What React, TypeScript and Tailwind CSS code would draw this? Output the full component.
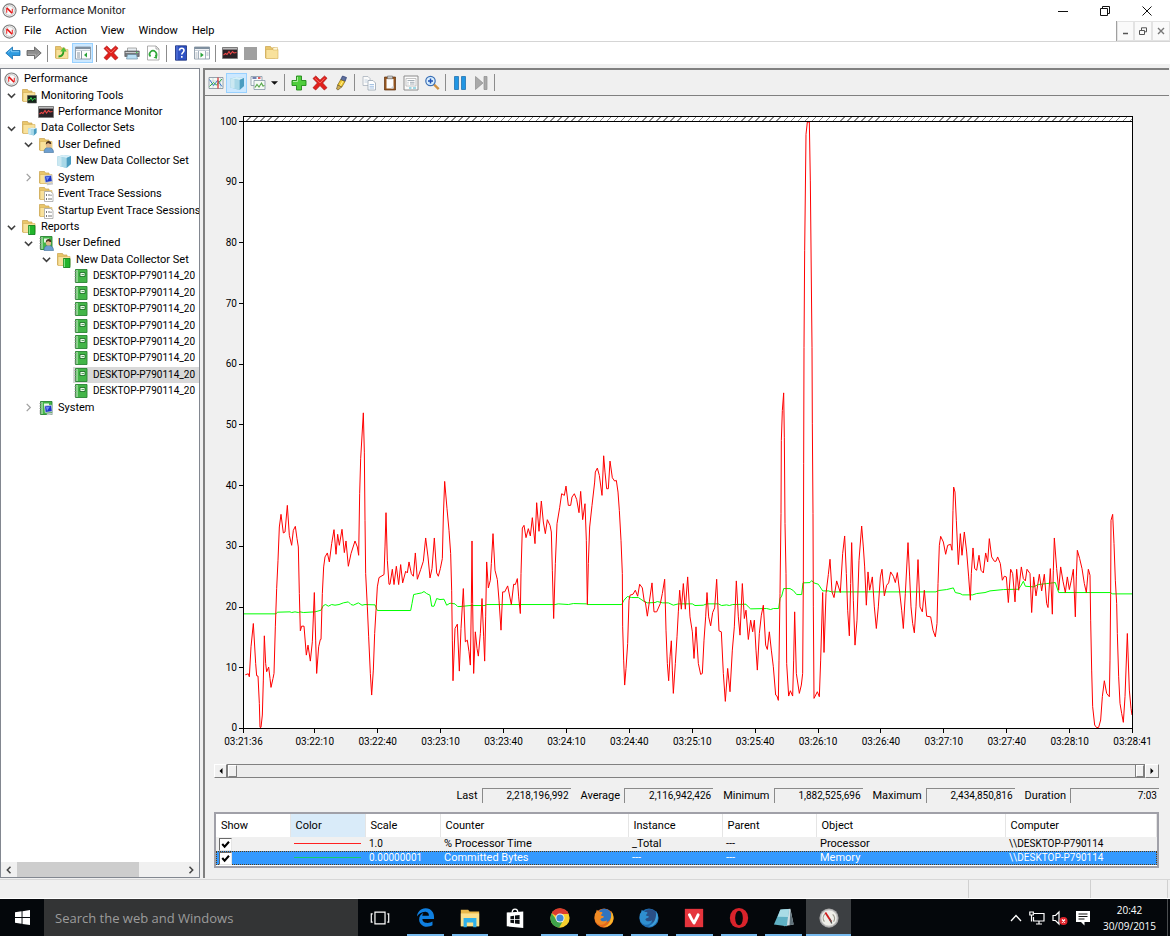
import type { ReactNode } from "react";
import { FaEdgeLegacy } from "react-icons/fa";

type IconProps = { className?: string };

function Svg({ className = "size-4", children }: { className?: string; children: ReactNode }) {
  return (
    <svg viewBox="0 0 16 16" className={`shrink-0 ${className}`} fill="none" aria-hidden="true">
      {children}
    </svg>
  );
}

/* ---------- icons ---------- */

function GaugeIcon({ className }: IconProps) {
  return (
    <Svg className={className}>
      <circle cx="8" cy="8" r="7" fill="#fff" stroke="#7d7d7d" strokeWidth="1.2" />
      <circle cx="8" cy="8" r="5.2" fill="#fafafa" stroke="#a9a9a9" strokeWidth=".8" />
      <path d="M5 10.500V5.500" stroke="#e33" strokeWidth="1.200" />
      <path d="M5 5 10.800 11" stroke="#e01010" strokeWidth="1.700" />
      <path d="M11 10.500V6" stroke="#e33" strokeWidth="1.200" />
    </Svg>
  );
}

function FolderShape() {
  return (
    <>
      <path d="M1.500 1.500h5l1 1.500H11v10H1.500z" fill="#e9c66b" stroke="#c9a24a" strokeWidth=".7" />
      <path d="M2 4.500h12v9H2z" fill="#f8e19c" stroke="#d3ae58" strokeWidth=".6" />
    </>
  );
}

function FolderIcon() {
  return (
    <Svg>
      <FolderShape />
      <path d="M9 2.500h4.500V5H9z" fill="#fff7d8" stroke="#d3ae58" strokeWidth=".5" />
    </Svg>
  );
}

function MonitorChartIcon() {
  return (
    <Svg>
      <path d="M.5 2.500h15v11H.5z" fill="#2a2226" stroke="#777" strokeWidth=".8" />
      <path d="M1 3h14v1.600H1z" fill="#b9b9b9" />
      <path d="m1.500 10 2-1.500 1.500 1 2-3 1.500 2.500 2-2.500 1.500 1.500 2.500-.5" stroke="#f04848" strokeWidth="1.100" />
    </Svg>
  );
}

function ToolsFolderIcon() {
  return (
    <Svg>
      <FolderShape />
      <path d="M6.500 7.500h9v7.500h-9z" fill="#15241a" stroke="#555" strokeWidth=".6" />
      <path d="m7 12 2-.5 1-2 1.500 3 1.500-2 2 .5" stroke="#35d04a" strokeWidth="1" />
    </Svg>
  );
}

function CubeShape() {
  return (
    <>
      <path d="m1.500 3.500 6-1.500 7.500 1v8l-4.500 4-9-2.500z" fill="#8cc6df" />
      <path d="m1.500 3.500 6-1.500 7.500 1-4.500 2z" fill="#d7eff8" />
      <path d="M10.500 5v10l4.500-4V3z" fill="#4a9cc0" />
      <path d="m1.500 3.500 9 1.500v10l-9-2.500z" fill="#a8d8e8" />
      <path d="m1.500 3.500 4 .7v9.300l-4-1z" fill="#cbe8f1" />
    </>
  );
}

function CubeIcon() {
  return (
    <Svg>
      <CubeShape />
    </Svg>
  );
}

function SetsFolderIcon() {
  return (
    <Svg>
      <FolderShape />
      <g transform="translate(6.500 6.500) scale(.6)">
        <CubeShape />
      </g>
    </Svg>
  );
}

function PersonShape() {
  return (
    <>
      <path d="M6 15.500c0-3.500 1.500-5 4.500-5s5 1.500 5 5z" fill="#6d9fd0" stroke="#42709c" strokeWidth=".6" />
      <circle cx="10.500" cy="8" r="2.600" fill="#e3b98b" />
      <path d="M7.800 7.500c0-2.700 1.400-3.500 2.900-3.500s2.700 1.300 2.500 3c-1.600.2-2.200-.8-3.200-1z" fill="#4b3520" />
    </>
  );
}

function UserFolderIcon() {
  return (
    <Svg>
      <FolderShape />
      <PersonShape />
    </Svg>
  );
}

function ComputerShape() {
  return (
    <>
      <path d="m6.500 6 7-.8.800 6.300-7 1z" fill="#1b35c9" stroke="#c9cfdb" strokeWidth=".9" />
      <path d="m8 7 4-.5-3 4.500z" fill="#6f8bf3" />
      <path d="M8.500 13.500 15 12.500v2l-6 .8z" fill="#c4c8cf" />
    </>
  );
}

function SystemFolderIcon() {
  return (
    <Svg>
      <FolderShape />
      <ComputerShape />
    </Svg>
  );
}

function TraceFolderIcon() {
  return (
    <Svg>
      <FolderShape />
      <path d="M6.500 5.500h6l2.500 2v8H6.500z" fill="#fff" stroke="#9a9a9a" strokeWidth=".7" />
      <path d="M8.500 8v2M11 8v2M13 8.500V10M8.500 12v2M11 12v2M13 12v2" stroke="#777" strokeWidth="1" />
    </Svg>
  );
}

function ReportsFolderIcon() {
  return (
    <Svg>
      <FolderShape />
      <path d="M7.500 6.500H14v9H7.500z" fill="#22b52c" stroke="#087a14" strokeWidth=".8" />
      <path d="M8.300 7v8" stroke="#a6efa6" strokeWidth=".9" />
    </Svg>
  );
}

function BookShape() {
  return (
    <>
      <path d="M2.500 1.500H14v13H2.500z" fill="#43b548" stroke="#2a8433" strokeWidth=".9" />
      <path d="M3 2h2v12H3z" fill="#8bd68d" />
      <path d="M1.500 3.500h2M1.500 6h2M1.500 8.500h2M1.500 11h2M1.500 13h2" stroke="#8d8d8d" strokeWidth=".9" />
    </>
  );
}

function BookIcon() {
  return (
    <Svg>
      <BookShape />
      <path d="M7 4.500h5v4H7z" fill="#eafbe9" stroke="#15661f" strokeWidth=".8" />
      <path d="M8.500 6.500H11" stroke="#4c9a52" strokeWidth=".9" />
    </Svg>
  );
}

function UserBookIcon() {
  return (
    <Svg>
      <BookShape />
      <path d="M6 3.500h5v4H6z" fill="#eafbe9" />
      <PersonShape />
    </Svg>
  );
}

function SystemBookIcon() {
  return (
    <Svg>
      <BookShape />
      <path d="M6 3.500h5v4H6z" fill="#eafbe9" />
      <ComputerShape />
    </Svg>
  );
}

function ArrowIcon({ flip = false }: { flip?: boolean }) {
  return (
    <Svg className={flip ? "size-4 rotate-180" : "size-4"}>
      <path
        d="M.8 8 7.500 2v3.500H15v5H7.500V14z"
        fill={flip ? "#8f8f8f" : "#2e9be0"}
        stroke={flip ? "#5c5c5c" : "#176fae"}
        strokeWidth=".8"
        strokeLinejoin="round"
      />
      <path d="m3 7.500 3.500-3.200v2.400h7.500" stroke={flip ? "#b8b8b8" : "#8fd2f7"} strokeWidth=".8" />
    </Svg>
  );
}

function FolderUpIcon() {
  return (
    <Svg>
      <FolderShape />
      <path d="M4.500 11.500c4 0 5-2 5-6" stroke="#2f9e24" strokeWidth="1.800" />
      <path d="m6.300 6.500 3.300-4.300 3.200 4.300z" fill="#4ec03a" />
    </Svg>
  );
}

function PaneIcon({ right = false }: { right?: boolean }) {
  return (
    <Svg>
      <path d="M.5 2h15v12H.5z" fill="#fdfdfd" stroke="#8a98a6" strokeWidth=".9" />
      <path d="M.5 2h15v2H.5z" fill="#7f8f9f" />
      <path d="M1 5.300h14" stroke="#b9c4cf" strokeWidth="1" />
      {right ? (
        <>
          <path d="M11.500 6v8M4.500 6v8M1.500 8h2M1.500 10h2M1.500 12h2M12.500 8h2M12.500 10h2" stroke="#9aa8b5" strokeWidth=".9" />
          <path d="m6.500 7.500 3.200 2.500-3.200 2.500z" fill="#29a339" />
        </>
      ) : (
        <>
          <path d="M6.500 6v8M2 8h3M2 10h3M2 12h3" stroke="#7c8b99" strokeWidth=".9" />
          <path d="m12 7.500-3 2.500 3 2.500z" fill="#29a339" />
        </>
      )}
    </Svg>
  );
}

function DeleteIcon() {
  return (
    <Svg>
      <path
        d="M1 3.500 3.800 1l4.200 4.200L12.500 1 15 3.200 10.600 8l4.400 4.700L12.300 15 8 10.600 3.700 15 1 12.700 5.400 8z"
        fill="#e2201c"
        stroke="#a50f0d"
        strokeWidth=".7"
      />
      <path d="M3 3.300 8 8l4.500-4.700" stroke="#f77a70" strokeWidth=".8" />
    </Svg>
  );
}

function PrinterIcon() {
  return (
    <Svg>
      <path d="M3.500 3h9v4h-9z" fill="#e9eef2" stroke="#8b8b8b" strokeWidth=".7" />
      <path d="M.8 6h14.400v5.500H.8z" fill="#77797c" stroke="#4b4e51" strokeWidth=".6" />
      <path d="M1.500 7.500h13" stroke="#d3d6d8" strokeWidth=".9" />
      <path d="M3.500 9.500h9l1 4.500h-11z" fill="#b9dff4" stroke="#5c7f94" strokeWidth=".6" />
      <path d="M12 7.500h1.500" stroke="#42d34b" />
    </Svg>
  );
}

function RefreshIcon() {
  return (
    <Svg>
      <path d="M2.500 1h8.500l3 3v11H2.500z" fill="#fff" stroke="#9b9b9b" strokeWidth=".8" />
      <path d="M11 1v3h3" stroke="#9b9b9b" strokeWidth=".8" />
      <path d="M5.500 11.500a3.400 3.400 0 1 1 5 0" stroke="#31a83b" strokeWidth="1.700" />
      <path d="m12.300 10-.3 3.800-3.500-1z" fill="#31a83b" />
    </Svg>
  );
}

function HelpIcon() {
  return (
    <Svg>
      <path d="M2.500.8h11v14.400h-11z" fill="#2f52c4" stroke="#152c78" strokeWidth=".8" />
      <path d="M4 1v14" stroke="#6e8ae6" strokeWidth=".8" />
      <path d="M6.500 5.500c0-3 4.500-3 4.500 0 0 2-2.200 2-2.200 4" stroke="#fff" strokeWidth="1.600" />
      <path d="M8 11h1.600v1.700H8z" fill="#fff" />
    </Svg>
  );
}

function GraphViewIcon() {
  return (
    <Svg>
      <path d="M1 2.500h14v11H1z" fill="#f3faf5" stroke="#7d8c99" strokeWidth=".8" />
      <path d="M1 6h14M1 10h14M5 3v10M12.500 3v10" stroke="#c3d0da" strokeWidth=".7" />
      <path d="m1.500 4.500 4 6 4-5 4.500 6" stroke="#3c76cb" strokeWidth="1" />
      <path d="m1.500 11.500 4-4 3 2.500 5.500-6" stroke="#35b043" strokeWidth="1" />
      <path d="M10 2.500v11" stroke="#dd2b2b" strokeWidth="1.200" />
    </Svg>
  );
}

function GraphTypeIcon() {
  return (
    <Svg>
      <path d="M1 1.500h11v9H1z" fill="#f7fafc" stroke="#8496a6" strokeWidth=".8" />
      <path d="M2.500 3h4" stroke="#293f86" strokeWidth="1.300" />
      <path d="M8 3h2.500" stroke="#d53030" strokeWidth="1.500" />
      <path d="M4 5.500h11v9H4z" fill="#f4faf4" stroke="#8496a6" strokeWidth=".8" />
      <path d="m5 12.500 2-3 2 2.500 2.500-4 1.500 3 1.500-.5" stroke="#57a74b" strokeWidth="1.100" />
    </Svg>
  );
}

function PlusIcon() {
  return (
    <Svg>
      <path
        d="M5.500 1h5v4.500H15v5h-4.500V15h-5v-4.500H1v-5h4.500z"
        fill="#4fce3c"
        stroke="#23891a"
        strokeWidth=".9"
      />
      <path d="M6.500 2v4.500H2" stroke="#b5f2a6" strokeWidth=".9" />
    </Svg>
  );
}

function HighlightIcon() {
  return (
    <Svg>
      <path d="m9.500 1 4 1.500-1.500 4-4.300-1.800z" fill="#5d6f9c" stroke="#27386f" strokeWidth=".7" />
      <path d="M7.700 4.700 12 6.500 8.800 12 4.700 10z" fill="#f4cd31" stroke="#7a6012" strokeWidth=".7" />
      <path d="M10 6 7 11" stroke="#fff0a0" strokeWidth=".9" />
      <path d="m4.700 10 4 2L5 15l-1.500-1z" fill="#cfae52" stroke="#5a4a20" strokeWidth=".6" />
    </Svg>
  );
}

function CopyIcon() {
  return (
    <Svg>
      <path d="M2 1.500h5l2 2v7H2z" fill="#fbfbfb" stroke="#a9b3bd" strokeWidth=".8" />
      <path d="M3.500 5h3M3.500 7h3" stroke="#b9cbdd" strokeWidth=".8" />
      <path d="M7 5.500h5l2.500 2.500v7H7z" fill="#fff" stroke="#98a5b3" strokeWidth=".8" />
      <path d="M8.500 9.500H13M8.500 11.300H13M8.500 13H13" stroke="#8fb4dd" strokeWidth=".8" />
    </Svg>
  );
}

function PasteIcon() {
  return (
    <Svg>
      <path d="M2.500 2h11v13h-11z" fill="#96561f" stroke="#5d2f0d" strokeWidth=".7" />
      <path d="M4.500 4h7v9.500h-7z" fill="#fdfdfd" />
      <path d="M5.500 1h5v2.800h-5z" fill="#c7c7c7" stroke="#6d6d6d" strokeWidth=".6" />
      <path d="m11.500 10.500-3 3h3z" fill="#c9d2db" />
    </Svg>
  );
}

function PropertiesIcon() {
  return (
    <Svg>
      <path d="M1 1h14v14H1z" fill="#fbfbfb" stroke="#8c8c8c" strokeWidth="1" />
      <path d="M3 3.500h10v7.500H3z" fill="#fff" stroke="#b4b4b4" strokeWidth=".8" />
      <path d="M4.500 5.500h7M4.500 7.300h1M7 7.300h4.500M4.500 9h1M7 9h4.500" stroke="#8d99a3" strokeWidth=".8" />
      <path d="M6 13h2.500M10 13h3" stroke="#40b6cf" strokeWidth="1.200" />
    </Svg>
  );
}

function ZoomIcon() {
  return (
    <Svg>
      <path d="m10 9.500 4.700 4.700" stroke="#d09142" strokeWidth="2.400" />
      <circle cx="6.500" cy="6" r="4.700" fill="#d9efff" stroke="#3b6fb5" strokeWidth="1.200" />
      <path d="M6.500 3.500v5M4 6h5" stroke="#1f50b4" strokeWidth="1.500" />
    </Svg>
  );
}

function PauseIcon() {
  return (
    <Svg>
      <path d="M2.500 1.500h4v13h-4zM9.500 1.500h4v13h-4z" fill="#2196e3" stroke="#1467a8" strokeWidth=".7" />
    </Svg>
  );
}

function StepIcon() {
  return (
    <Svg>
      <path d="m2.500 1.500 7.500 6.500-7.500 6.500zM11 1.500h3v13h-3z" fill="#a9a9a9" stroke="#8d8d8d" strokeWidth=".7" />
    </Svg>
  );
}

function Chevron({ open }: { open: boolean }) {
  return (
    <svg viewBox="0 0 10 10" className="size-[9px]" fill="none" aria-hidden="true">
      <path
        d={open ? "M1 3l4 4 4-4" : "M3 1l4 4-4 4"}
        stroke={open ? "#404040" : "#a0a0a0"}
        strokeWidth={open ? 1.8 : 1.4}
      />
    </svg>
  );
}

/* ---------- window chrome ---------- */

function TitleBar() {
  return (
    <header className="flex h-[21px] items-center bg-white px-0.5">
      <GaugeIcon className="size-[15px]" />
      <h1 className="ml-1 flex-1 text-[#222]">Performance Monitor</h1>
      <div className="flex">
        <button type="button" aria-label="Minimize" className="grid h-5 w-[42px] place-items-center">
          <svg viewBox="0 0 10 10" className="size-2.5" stroke="#111" fill="none">
            <path d="M0 5.500h10" />
          </svg>
        </button>
        <button type="button" aria-label="Restore" className="grid h-5 w-[42px] place-items-center">
          <svg viewBox="0 0 10 10" className="size-2.5" stroke="#111" fill="none">
            <path d="M.5 2.500h7v7h-7zM2.500 2V.5h7v7H8" />
          </svg>
        </button>
        <button type="button" aria-label="Close" className="grid h-5 w-[42px] place-items-center">
          <svg viewBox="0 0 10 10" className="size-2.5" stroke="#111" fill="none">
            <path d="m.5.5 9 9M9.500.5l-9 9" />
          </svg>
        </button>
      </div>
    </header>
  );
}

function MenuBar() {
  return (
    <nav className="flex h-5 items-center bg-white pl-0.5">
      <GaugeIcon className="size-[15px]" />
      <div className="ml-[7px] flex flex-1 gap-[14px]">
        {["File", "Action", "View", "Window", "Help"].map((m) => (
          <button key={m} type="button">
            {m}
          </button>
        ))}
      </div>
      <div className="flex h-full border-l border-[#a0a0a0] bg-[#f0f0f0]">
        <button type="button" aria-label="Minimize child" className="grid w-[17px] place-items-center border border-[#e3e3e3] bg-[#fafafa]">
          <svg viewBox="0 0 8 8" className="size-2" stroke="#555" fill="none">
            <path d="M1 6.500h5" strokeWidth="1.500" />
          </svg>
        </button>
        <button type="button" aria-label="Restore child" className="grid w-[18px] place-items-center border border-[#e3e3e3] bg-[#fafafa]">
          <svg viewBox="0 0 8 8" className="size-2" stroke="#555" fill="none">
            <path d="M.5 3.500h5v4h-5zM2.500 3V.8h5v4H6" />
          </svg>
        </button>
        <button type="button" aria-label="Close child" className="grid w-[18px] place-items-center border border-[#e3e3e3] bg-[#fafafa]">
          <svg viewBox="0 0 8 8" className="size-2" stroke="#777" fill="none">
            <path d="m1 1 6 6M7 1 1 7" strokeWidth="1.400" />
          </svg>
        </button>
      </div>
    </nav>
  );
}

function ToolButton({ label, active = false, children }: { label: string; active?: boolean; children: ReactNode }) {
  return (
    <button
      type="button"
      aria-label={label}
      className={`grid h-5 w-[21px] shrink-0 place-items-center ${
        active ? "border border-[#99d1ff] bg-[#cce8ff]" : ""
      }`}
    >
      {children}
    </button>
  );
}

function Separator() {
  return (
    <span className="flex w-[7px] shrink-0 justify-center">
      <span className="h-[17px] w-px bg-[#8c8c8c]" />
    </span>
  );
}

function MainToolbar() {
  return (
    <div className="flex h-[23px] items-center border-t border-[#d5d5d5] bg-white pl-0.5">
      <ToolButton label="Back"><ArrowIcon /></ToolButton>
      <ToolButton label="Forward"><ArrowIcon flip /></ToolButton>
      <Separator />
      <ToolButton label="Up one level"><FolderUpIcon /></ToolButton>
      <ToolButton label="Show console tree" active><PaneIcon /></ToolButton>
      <Separator />
      <ToolButton label="Delete"><DeleteIcon /></ToolButton>
      <ToolButton label="Print"><PrinterIcon /></ToolButton>
      <ToolButton label="Refresh"><RefreshIcon /></ToolButton>
      <Separator />
      <ToolButton label="Help"><HelpIcon /></ToolButton>
      <ToolButton label="Show action pane"><PaneIcon right /></ToolButton>
      <Separator />
      <ToolButton label="View log data"><MonitorChartIcon /></ToolButton>
      <ToolButton label="Stop"><span className="size-[13px] bg-[#a0a0a0]" /></ToolButton>
      <ToolButton label="Open folder"><FolderIcon /></ToolButton>
    </div>
  );
}

/* ---------- tree ---------- */

type TreeNode = {
  label: string;
  depth: number;
  open?: boolean;
  icon: ReactNode;
  selected?: boolean;
};

const DATASET = "DESKTOP-P790114_20";

const TREE: TreeNode[] = [
  { label: "Monitoring Tools", depth: 0, open: true, icon: <ToolsFolderIcon /> },
  { label: "Performance Monitor", depth: 1, icon: <MonitorChartIcon /> },
  { label: "Data Collector Sets", depth: 0, open: true, icon: <SetsFolderIcon /> },
  { label: "User Defined", depth: 1, open: true, icon: <UserFolderIcon /> },
  { label: "New Data Collector Set", depth: 2, icon: <CubeIcon /> },
  { label: "System", depth: 1, open: false, icon: <SystemFolderIcon /> },
  { label: "Event Trace Sessions", depth: 1, icon: <TraceFolderIcon /> },
  { label: "Startup Event Trace Sessions", depth: 1, icon: <TraceFolderIcon /> },
  { label: "Reports", depth: 0, open: true, icon: <ReportsFolderIcon /> },
  { label: "User Defined", depth: 1, open: true, icon: <UserBookIcon /> },
  { label: "New Data Collector Set", depth: 2, open: true, icon: <ReportsFolderIcon /> },
  ...Array.from({ length: 8 }, (_, i) => ({
    label: DATASET,
    depth: 3,
    icon: <BookIcon />,
    selected: i === 6,
  })),
  { label: "System", depth: 1, open: false, icon: <SystemBookIcon /> },
];

const INDENT = ["pl-[4px]", "pl-[21px]", "pl-[39px]", "pl-[56px]"];

function TreePanel() {
  return (
    <aside className="flex w-[200px] shrink-0 flex-col border border-[#828790] bg-white">
      <div role="tree" className="grid h-[347px] auto-rows-fr overflow-hidden pt-0.5">
        <div role="treeitem" className="flex items-center gap-[5px] pl-[3px]">
          <GaugeIcon className="size-[15px]" />
          Performance
        </div>
        {TREE.map((n, i) => (
          <div key={i} role="treeitem" className={`flex items-center ${INDENT[n.depth]}`}>
            <span className="flex w-4 shrink-0 pl-[2px]">{n.open !== undefined && <Chevron open={n.open} />}</span>
            <span
              className={`flex h-full flex-1 items-center gap-1 whitespace-nowrap ${
                n.selected ? "bg-[#d9d9d9]" : ""
              }`}
            >
              {n.icon}
              <span className={n.depth === 3 ? "text-[10px]" : ""}>{n.label}</span>
            </span>
          </div>
        ))}
      </div>
      <div className="flex-1" />
      <div className="flex h-[15px] bg-[#f0f0f0]">
        <button type="button" aria-label="Scroll left" className="grid w-4 place-items-center">
          <svg viewBox="0 0 8 8" className="size-2" fill="none" stroke="#444" strokeWidth="1.500">
            <path d="M5.500.8 2.300 4l3.200 3.200" />
          </svg>
        </button>
        <div className="flex-1">
          <div className="h-full w-[122px] bg-[#cdcdcd]" />
        </div>
        <button type="button" aria-label="Scroll right" className="grid w-4 place-items-center">
          <svg viewBox="0 0 8 8" className="size-2" fill="none" stroke="#444" strokeWidth="1.500">
            <path d="M2.500.8 5.700 4 2.500 7.200" />
          </svg>
        </button>
      </div>
    </aside>
  );
}

/* ---------- chart ---------- */

// Each run is a stretch of samples relative to its own origin; the plot is 2664 x 1821 units.
type Run = { x: number; y: number; pts: string };

const PROCESSOR: Run[] = [
  {
    x: -12,
    y: 777,
    pts: "16,884 25,881 28,890 33,800 40,730 47,850 50,887 54,888 58,970 60,1042 63,1042 67,1005 70,900 73,767 77,850 80,875 86,861 90,895 93,922 99,895 102,880 106,740 110,625 114,540 118,440 123,402 130,458 135,455 142,375 148,465 155,495 160,450 166,438 171,475 175,500 178,640 181,752 185,738 192,738 199,825 204,795 211,843 217,785 223,637 227,780 230,880 236,800 241,778 243,778 247,640 251,560 255,530 262,518 268,545 275,490 282,448 288,522 293,462 298,495 306,447 313,517 318,482 325,558 333,520 345,482 352,500 356,525 359,340 362,235 370,97 373,215 375,420 377,580 382,680 386,770 391,880 395,945 400,870 404,760 408,690 412,620 417,592 432,583 435,500 438,397 442,540 447,612 450,612 457,567 462,613 469,558 476,613 482,553 488,608 497,573 502,578 507,545 514,580 520,588 526,518 532,597 542,568 550,543 557,473 564,530 570,593 576,565 583,473 590,578 595,588 601,565 607,535 610,410 614,303 621,385 627,450 632,520 635,630 637,780 639,902 645,745 652,732 658,873 663,745",
  },
  {
    x: 648,
    y: 927,
    pts: "10,475 16,635 22,630 27,665 31,705 34,520 36,332 38,520 41,730 46,605 51,655 55,678 61,610 66,505 71,620 74,693 77,560 80,395 85,473 91,450 94,400 99,310 105,420 112,448 117,510 123,600 128,485 134,485 143,467 154,523 161,462 166,463 172,445 176,500 181,550 183,430 187,293 192,285 198,322 205,295 211,317 217,262 225,340 230,217 237,303 244,212 250,275 256,310 262,268 270,285 274,305 277,420 281,565 286,400 291,280 299,232 305,190 313,195 318,167 325,225 332,225 336,200 343,190 350,207 357,247 362,183 368,268 375,220 379,330 382,523 385,400 389,290 396,225 404,155 406,125 412,113 418,135 426,195 431,76 435,125 440,175 445,175 450,92 457,142 464,152 469,150 474,185 478,240 483,330 487,430 488,590 491,690 494,765 498,715 503,640 507,510 510,495 519,492 526,480 533,498 539,462 547,473 553,515 556,515 562,558 568,515 576,458 582,545 590,545 601,520 607,490 614,447 618,600 622,700 626,752 630,680 634,632 637,720 640,790 646,700 651,620 655,545 659,480 664,537 670,460 676,537",
  },
  {
    x: 1308,
    y: 777,
    pts: "23,590 30,710 37,755 42,835 48,740 55,850 62,883 67,880 72,780 77,710 81,637 86,710 92,737 98,697 104,683 110,597 117,752 124,755 130,880 136,964 143,865 150,935 157,810 163,740 169,602 175,710 180,765 187,610 193,715 198,690 205,778 212,720 218,755 223,720 228,810 232,870 238,760 244,705 250,675 257,795 262,808 268,755 274,810 280,860 287,945 291,948 295,961 297,840 300,640 303,400 304,180 307,90 311,37 313,170 315,430 318,580 320,850 326,948 331,932 338,948 341,840 344,695 349,880 358,940 364,915 368,880 370,600 371,250 372,-100 374,-390 378,-740 382,-777 388,-777 391,-600 396,-100 397,130 399,400 400,680 402,955 412,935 418,950 422,840 428,637 432,817 438,640 445,583 450,537 456,635 462,652 470,602 481,637 488,520 494,467 499,580 503,690 508,767 512,610 515,487 520,660 525,795 531,720 537,540 545,437 550,500 554,560 559,675 564,575 569,630 577,590 583,680 589,745 595,680 601,590 606,567 613,647 620,615 626,608 632,575 640,588 646,607 652,577 659,635 665,690 670,745 676,640",
  },
  {
    x: 1968,
    y: 1017,
    pts: "24,247 29,350 33,440 38,490 43,518 48,440 54,298 60,440 67,455 73,390 80,468 92,470 99,510 106,530 111,490 114,370 118,255 122,228 130,245 137,282 143,255 152,252 156,270 159,150 161,80 165,95 169,180 175,313 181,220 186,285 193,215 200,275 206,350 211,420 214,340 219,263 224,325 230,330 237,285 243,330 250,338 257,278 263,305 268,235 275,290 283,303 288,303 293,290 301,310 307,360 313,348 319,350 325,427 332,327 338,340 345,425 350,327 356,390 364,320 370,355 376,362 381,327 390,340 395,457 401,350 408,407 413,375 418,342 425,392 433,342 440,430 444,442 451,325 457,462 460,330 463,233 470,325 476,390 482,320 489,363 496,397 502,350 508,388 514,360 520,327 526,470 529,350 532,270 539,295 546,325 553,370 559,397 565,327 570,345 572,480 575,630 578,740 584,795 590,803 596,802 602,780 607,710 613,662 620,700 628,710 630,600 632,400 633,180 638,162 642,250 646,360 650,430 652,520 656,650 660,730 665,760 670,787 675,710 682,520 688,690 693,745 696,765",
  },
];

const COMMITTED: Run[] = [
  {
    x: -12,
    y: 777,
    pts: "12,701 108,701 112,696 150,695 155,697 165,695 175,697 180,695 190,697 225,695 243,690 250,676 257,673 265,678 275,673 285,675 297,673 310,668 325,665 333,673 340,675 355,668 366,675 375,673 405,674 412,691 512,691 516,670 521,643 530,641 545,638 552,634 560,640 570,645 575,678 582,678 590,655 600,658 612,657 620,675 630,669 645,671 653,679",
  },
  {
    x: 648,
    y: 927,
    pts: "0,529 30,526 75,526 80,523 285,523 295,521 325,523 340,520 380,521 382,523 485,523 492,510 502,499 515,502 535,502 550,512 562,518 585,517 592,514 608,518 625,518 640,525 655,521",
  },
  {
    x: 1308,
    y: 777,
    pts: "0,671 37,671 45,676 70,675 80,671 115,671 125,676 140,674 148,676 158,673 198,672 205,680 212,686 260,685 272,688 280,685 296,685 300,655 305,648 311,625 330,625 340,631 350,643 365,643 369,608 390,607 395,601 402,608 415,612 428,632 445,632 455,635",
  },
  {
    x: 1968,
    y: 1017,
    pts: "0,395 108,395 115,391 140,388 160,383 166,397 180,400 188,404 218,404 230,400 255,397 270,392 310,388 355,387 362,378 370,363 376,378 400,380 415,373 440,370 466,367 476,397 630,397 638,401 696,401",
  },
];

function joinRuns(runs: Run[]) {
  return runs
    .flatMap((r) =>
      r.pts.split(" ").map((p) => {
        const [px, py] = p.split(",").map(Number);
        return `${px + r.x},${py + r.y}`;
      }),
    )
    .join(" ");
}

const Y_TICKS = [100, 90, 80, 70, 60, 50, 40, 30, 20, 10, 0];

// secs = distance to the next tick
const X_TICKS = [
  { label: "03:21:36", secs: 34 },
  { label: "03:22:10", secs: 30 },
  { label: "03:22:40", secs: 30 },
  { label: "03:23:10", secs: 30 },
  { label: "03:23:40", secs: 30 },
  { label: "03:24:10", secs: 30 },
  { label: "03:24:40", secs: 30 },
  { label: "03:25:10", secs: 30 },
  { label: "03:25:40", secs: 30 },
  { label: "03:26:10", secs: 30 },
  { label: "03:26:40", secs: 30 },
  { label: "03:27:10", secs: 30 },
  { label: "03:27:40", secs: 30 },
  { label: "03:28:10", secs: 30 },
  { label: "03:28:41", secs: 0 },
];

function Chart() {
  return (
    <div className="flex flex-1 flex-col pt-5 pr-[36px] pl-[13px] text-[10px]">
      <div className="ml-[25px] h-[6px] border border-black bg-white bg-[repeating-linear-gradient(135deg,transparent_0px,transparent_4px,#888_4px,#888_5px)]" />
      <div className="-mt-px flex min-h-[600px] flex-1">
        <div className="flex w-[25px] flex-col justify-between">
          {Y_TICKS.map((y) => (
            <div key={y} className="flex h-px items-center justify-end gap-0.5">
              <span>{y}</span>
              <span className="h-px w-1 bg-black" />
            </div>
          ))}
        </div>
        <div className="relative flex-1 border border-black bg-white">
          <svg viewBox="0 0 2664 1821" preserveAspectRatio="none" className="absolute inset-0 size-full" fill="none">
            <polyline points={joinRuns(COMMITTED)} stroke="#00ff00" strokeWidth="1" vectorEffect="non-scaling-stroke" />
            <polyline points={joinRuns(PROCESSOR)} stroke="#ff0000" strokeWidth="1" vectorEffect="non-scaling-stroke" />
          </svg>
        </div>
      </div>
      <div className="ml-[25px] flex pr-px">
        {X_TICKS.map((t) => (
          <div key={t.label} className="w-0 basis-0" style={{ flexGrow: t.secs }}>
            <div className="flex w-px flex-col items-center">
              <span className="h-1 w-px bg-black" />
              <span className="leading-[18px]">{t.label}</span>
            </div>
          </div>
        ))}
      </div>
    </div>
  );
}

function TimeSlider() {
  const bevel = "border border-t-white border-l-white border-r-[#808080] border-b-[#808080] bg-[#f0f0f0]";
  return (
    <div className="flex h-[14px]">
      <button type="button" aria-label="Earlier" className={`grid w-[13px] place-items-center ${bevel}`}>
        <svg viewBox="0 0 6 6" className="size-1.5" fill="#000">
          <path d="M4.500 0v6l-3-3z" />
        </svg>
      </button>
      <div className="flex flex-1 justify-between border border-[#808080] bg-[#ececec]">
        <div className={`w-[9px] ${bevel}`} />
        <div className="border-l border-[#808080]">
          <div className={`h-full w-[8px] ${bevel}`} />
        </div>
      </div>
      <button type="button" aria-label="Later" className={`grid w-[14px] place-items-center ${bevel}`}>
        <svg viewBox="0 0 6 6" className="size-1.5" fill="#000">
          <path d="M1.500 0v6l3-3z" />
        </svg>
      </button>
    </div>
  );
}

const STATS = [
  ["Last", "2,218,196,992"],
  ["Average", "2,116,942,426"],
  ["Minimum", "1,882,525,696"],
  ["Maximum", "2,434,850,816"],
  ["Duration", "7:03"],
];

function StatsRow() {
  return (
    <div className="mt-[10px] flex justify-end gap-[10px]">
      {STATS.map(([label, value]) => (
        <div key={label} className="flex h-[15px] items-center gap-1">
          <label htmlFor={`stat-${label}`}>{label}</label>
          <output
            id={`stat-${label}`}
            className="h-full w-[89px] border-t border-l border-[#8a8a8a] pr-0.5 text-right text-[10px] leading-[14px]"
          >
            {value}
          </output>
        </div>
      ))}
    </div>
  );
}

const COUNTERS = [
  { color: "bg-[#ff2020]", scale: "1.0", counter: "% Processor Time", instance: "_Total", object: "Processor", selected: false },
  { color: "bg-[#10cf70]", scale: "0.00000001", counter: "Committed Bytes", instance: "---", object: "Memory", selected: true },
];

const HEADERS = [
  { name: "Show", width: "w-[74px]" },
  { name: "Color", width: "w-[75px]" },
  { name: "Scale", width: "w-[75px]" },
  { name: "Counter", width: "w-[188px]" },
  { name: "Instance", width: "w-[94px]" },
  { name: "Parent", width: "w-[94px]" },
  { name: "Object", width: "w-[189px]" },
  { name: "Computer", width: "" },
];

function CounterTable() {
  return (
    <div className="mt-[9px] border-2 border-[#a0a0a8] bg-white pb-px">
      <table className="w-full table-fixed border-collapse text-left">
        <thead>
          <tr className="h-[23px]">
            {HEADERS.map((h) => (
              <th
                key={h.name}
                className={`border-r border-[#e5e5e5] py-0 pl-[5px] font-normal ${h.width} ${
                  h.name === "Color" ? "bg-[#d9ebf9]" : ""
                }`}
              >
                {h.name}
              </th>
            ))}
          </tr>
        </thead>
        <tbody className="leading-[14px]">
          {COUNTERS.map((c) => (
            <tr
              key={c.counter}
              className={
                c.selected
                  ? "bg-[#3399ff] text-white outline-1 -outline-offset-1 outline-dotted outline-[#5a3a10]"
                  : "bg-[#f0f0f0]"
              }
            >
              <td className="p-0 pl-[3px]">
                <label className="relative flex size-[13px]">
                  <input
                    type="checkbox"
                    defaultChecked
                    aria-label={`Show ${c.counter}`}
                    className="peer size-[13px] appearance-none border border-[#e5e5e5] border-t-[#696969] border-l-[#696969] bg-white"
                  />
                  <svg viewBox="0 0 12 12" className="absolute inset-0 hidden peer-checked:block" fill="none">
                    <path d="m3 5.500 2.200 2.500L9.200 3.500" stroke="#000" strokeWidth="1.900" />
                  </svg>
                </label>
              </td>
              <td className="p-0 pr-1 pl-1">
                <div className="flex h-[14px] flex-col pt-1.5">
                  <span className={`h-px w-full ${c.color}`} />
                </div>
              </td>
              <td className="p-0 pl-1 text-[10px]">{c.scale}</td>
              <td className="p-0 pl-1">{c.counter}</td>
              <td className="p-0 pl-1">{c.instance}</td>
              <td className="p-0 pl-1">---</td>
              <td className="p-0 pl-1">{c.object}</td>
              <td className="p-0 pl-1 text-[10px]">{"\\\\DESKTOP-P790114"}</td>
            </tr>
          ))}
        </tbody>
      </table>
    </div>
  );
}

function MonitorPanel() {
  return (
    <main className="mr-px ml-[3px] flex min-w-0 flex-1 flex-col border-t-2 border-l-2 border-[#808080] bg-[#f0f0f0]">
      <div className="flex h-[26px] items-center border-b border-[#808080]">
        <ToolButton label="View current activity"><GraphViewIcon /></ToolButton>
        <ToolButton label="View log data" active><CubeIcon /></ToolButton>
        <ToolButton label="Change graph type"><GraphTypeIcon /></ToolButton>
        <button type="button" aria-label="Graph type menu" className="grid w-[13px] place-items-center">
          <svg viewBox="0 0 8 4" className="h-1 w-[7px]" fill="#111">
            <path d="M0 0h8L4 4z" />
          </svg>
        </button>
        <Separator />
        <ToolButton label="Add counter"><PlusIcon /></ToolButton>
        <ToolButton label="Remove counter"><DeleteIcon /></ToolButton>
        <ToolButton label="Highlight"><HighlightIcon /></ToolButton>
        <Separator />
        <ToolButton label="Copy properties"><CopyIcon /></ToolButton>
        <ToolButton label="Paste counter list"><PasteIcon /></ToolButton>
        <ToolButton label="Properties"><PropertiesIcon /></ToolButton>
        <ToolButton label="Zoom"><ZoomIcon /></ToolButton>
        <Separator />
        <ToolButton label="Freeze display"><PauseIcon /></ToolButton>
        <ToolButton label="Update data"><StepIcon /></ToolButton>
        <Separator />
      </div>
      <Chart />
      <div className="pt-[13px] pr-[10px] pb-[10px] pl-[9px]">
        <TimeSlider />
        <StatsRow />
        <CounterTable />
      </div>
    </main>
  );
}

/* ---------- taskbar ---------- */

function TaskIcon({ children }: { children: ReactNode }) {
  return (
    <svg viewBox="0 0 24 24" className="size-[22px]" fill="none" aria-hidden="true">
      {children}
    </svg>
  );
}

const APPS: { name: string; running: boolean; focused?: boolean; icon: ReactNode }[] = [
  {
    name: "Task View",
    running: false,
    icon: (
      <TaskIcon>
        <path d="M6.500 5.500h11v13h-11zM4 7.500H2.500v9H4M20 7.500h1.500v9H20" stroke="#fff" strokeWidth="1.300" />
      </TaskIcon>
    ),
  },
  { name: "Edge", running: true, icon: <FaEdgeLegacy className="size-[19px] text-[#0f7fe0]" /> },
  {
    name: "File Explorer",
    running: true,
    icon: (
      <TaskIcon>
        <path d="M2 3h8l1.500 2H22v16H2z" fill="#e8b84b" />
        <path d="M2 7h20v14H2z" fill="#fbe08d" />
        <path d="M5 12h14v10h-3.500v-5h-7v5H5z" fill="#2fb1ea" />
      </TaskIcon>
    ),
  },
  {
    name: "Store",
    running: false,
    icon: (
      <TaskIcon>
        <path d="M9 6c0-5 6-5 6 0" stroke="#fff" strokeWidth="1.500" />
        <path d="m3 6 18-1v18L3 21z" fill="#fff" />
        <path d="m7 10 4-.5V13H7zM12 9.300l5-.6V13h-5zM7 14h4v3.800l-4-.5zM12 14h5v4.600l-5-.7z" fill="#0a0d10" />
      </TaskIcon>
    ),
  },
  {
    name: "Chrome",
    running: true,
    icon: (
      <TaskIcon>
        <circle cx="12" cy="12" r="10.500" fill="#f7cf2e" />
        <path d="M12 12 2.900 6.700A10.500 10.500 0 0 1 21.500 7.500H12z" fill="#dc3b2f" />
        <path d="M2.900 6.700A10.500 10.500 0 0 0 11 22.500L16 14l-4-2-4 2z" fill="#3fa34a" />
        <circle cx="12" cy="12" r="4.900" fill="#f4f4f4" />
        <circle cx="12" cy="12" r="3.900" fill="#3f87d6" />
      </TaskIcon>
    ),
  },
  {
    name: "Firefox",
    running: true,
    icon: (
      <TaskIcon>
        <circle cx="12" cy="12" r="10.500" fill="#e4681b" />
        <circle cx="12.500" cy="9.500" r="7.500" fill="#2f74c0" />
        <path d="M20 4.500c3.500 5 3 11-1 14.500-2 2-5 3-8 2.500 5-1 9.500-5 9-17z" fill="#f9b62b" />
        <path d="M2 8c1-2 2-2.500 2-5 1.500 1 2.500 2 4 2.500 1.500 0 2 0 2.500 1L8.500 9c1 1 3 .5 3.500 1.500-1 2-3 1-4 3 1 2.500 5 2.500 7.500 1-1 5-8 6.500-11.500 3C1.500 15 1.500 11 2 8z" fill="#f08a24" />
      </TaskIcon>
    ),
  },
  {
    name: "Firefox Developer Edition",
    running: true,
    icon: (
      <TaskIcon>
        <circle cx="12" cy="12" r="10.500" fill="#1d6cb2" />
        <circle cx="13" cy="10" r="7.500" fill="#2a4f86" />
        <path d="M2 8c1-2 2-2.500 2-5 1.500 1 2.500 2 4 2.500 1.500 0 2 0 2.500 1L8.500 9c1 1 3 .5 3.500 1.500-1 2-3 1-4 3 1 2.500 5 2.500 7.500 1-1 5-8 6.500-11.500 3C1.500 15 1.500 11 2 8z" fill="#2f8fd0" />
        <path d="M20 5c3 5 2 11-2 14-2 2-5 2.500-7 2 5-1 9-6 9-16z" fill="#3f9fd8" />
      </TaskIcon>
    ),
  },
  {
    name: "Vivaldi",
    running: true,
    icon: (
      <TaskIcon>
        <path d="M2 2h20v20H2z" fill="#e5343c" />
        <path d="M7 8.500c1.500 3.500 3 6 5 9 1.500-3 2.500-4.500 4.500-9" stroke="#fff" strokeWidth="3.200" strokeLinecap="round" strokeLinejoin="round" />
      </TaskIcon>
    ),
  },
  {
    name: "Opera",
    running: true,
    icon: (
      <TaskIcon>
        <ellipse cx="12" cy="12" rx="10" ry="11" fill="#d8232b" />
        <ellipse cx="12" cy="12" rx="4.200" ry="8" fill="#06080b" />
      </TaskIcon>
    ),
  },
  {
    name: "Notepad",
    running: true,
    icon: (
      <TaskIcon>
        <path d="m8 3 11-1 3.500 17L12 21z" fill="#cfdde2" />
        <path d="m8 3 9.500-.8L15 21 1 19z" fill="#5fb0c4" />
        <path d="m8 3 9.500-.8-1 8.800L5 10.500z" fill="#a9dce6" />
        <path d="m19 3 3.500 16-4.500.8z" fill="#5f7079" />
      </TaskIcon>
    ),
  },
  {
    name: "Performance Monitor",
    running: true,
    focused: true,
    icon: (
      <TaskIcon>
        <circle cx="12" cy="12" r="10.500" fill="#a9a9a9" />
        <circle cx="12" cy="12" r="8.800" fill="#efefe9" stroke="#c9c9c9" />
        <path d="M7 16a6.500 6.500 0 0 1 .5-8.500M16 8a6.500 6.500 0 0 1 1 8" stroke="#9a9a8e" strokeWidth="1.200" />
        <path d="m8 6 6.500 10" stroke="#cf1d1d" strokeWidth="2" />
        <path d="m13 13 2 5" stroke="#555" strokeWidth="1.500" />
      </TaskIcon>
    ),
  },
];

function Taskbar() {
  return (
    <footer className="flex h-[37px] shrink-0 bg-[#04070b] font-['Open_Sans','Noto_Sans',sans-serif]">
      <button type="button" aria-label="Start" className="grid w-11 place-items-center">
        <svg viewBox="0 0 16 16" className="size-[15px]" fill="#fff">
          <path d="M0 2.300 7 1.300V7.500H0zM8 1.200 16 0v7.500H8zM0 8.500h7v6.200L0 13.700zM8 8.500h8V16l-8-1.200z" />
        </svg>
      </button>
      <input
        type="search"
        aria-label="Search the web and Windows"
        placeholder="Search the web and Windows"
        className="w-[314px] bg-[#333435] px-[11px] text-[13px] text-white placeholder:text-[#9c9c9c]"
      />
      <div className="grid w-[493px] grid-cols-11">
        {APPS.map((a) => (
          <button
            key={a.name}
            type="button"
            aria-label={a.name}
            className={`relative grid place-items-center ${a.focused ? "bg-[#3c3f42]" : ""}`}
          >
            {a.icon}
            {a.running && (
              <span
                className={`absolute bottom-0 h-0.5 bg-[#76b9ed] ${a.focused ? "inset-x-0" : "inset-x-1"}`}
              />
            )}
          </button>
        ))}
      </div>
      <div className="flex flex-1 items-center justify-end">
        <div className="flex items-center gap-[7px]">
          <button type="button" aria-label="Show hidden icons">
            <svg viewBox="0 0 12 12" className="size-3" fill="none" stroke="#fff" strokeWidth="1.300">
              <path d="m1 9 5-5.500L11 9" />
            </svg>
          </button>
          <button type="button" aria-label="Network">
            <svg viewBox="0 0 16 16" className="size-4" fill="none" stroke="#fff" strokeWidth="1.200">
              <path d="M5 3.500h10v7.500H4.500V7M7 14h6M10 11v3M.8 2h3.500v3H.8zM2.500 5v6.500" />
            </svg>
          </button>
          <button type="button" aria-label="Volume muted">
            <svg viewBox="0 0 16 16" className="size-4" fill="none">
              <path d="M1 5.500h2.500L7 2v12l-3.500-3.500H1z" stroke="#fff" strokeWidth="1.200" />
              <circle cx="11.500" cy="11" r="4" fill="#e0242c" />
              <path d="m10 9.500 3 3M13 9.500l-3 3" stroke="#fff" strokeWidth="1.200" />
            </svg>
          </button>
          <button type="button" aria-label="Notifications">
            <svg viewBox="0 0 16 16" className="size-4">
              <path d="M1 1h14v11H9.500v3.500L6 12H1z" fill="#fff" />
              <path d="M3.500 4h9M3.500 6.500h9M3.500 9h6" stroke="#111" strokeWidth="1" />
            </svg>
          </button>
        </div>
        <div className="mr-[11px] ml-3 text-center text-[10px] leading-4 text-white">
          <div>20:42</div>
          <div>30/09/2015</div>
        </div>
        <div className="mr-0.5 h-full w-px bg-[#4a4d50]" />
      </div>
    </footer>
  );
}

export default function App() {
  return (
    <div className="flex min-h-screen flex-col bg-[#f0f0f0] font-[Roboto,'Open_Sans',sans-serif] text-[11px] leading-[14px] text-black">
      <TitleBar />
      <MenuBar />
      <MainToolbar />
      <div className="flex flex-1 pt-1">
        <TreePanel />
        <MonitorPanel />
      </div>
      <div className="mt-px flex h-5 justify-end border-t border-b border-t-[#d7d7d7] border-b-white">
        <div className="w-[122px] border-l border-[#d0d0d0]" />
        <div className="w-[78px] border-x border-[#d0d0d0]" />
        <div className="w-0.5" />
      </div>
      <Taskbar />
    </div>
  );
}
